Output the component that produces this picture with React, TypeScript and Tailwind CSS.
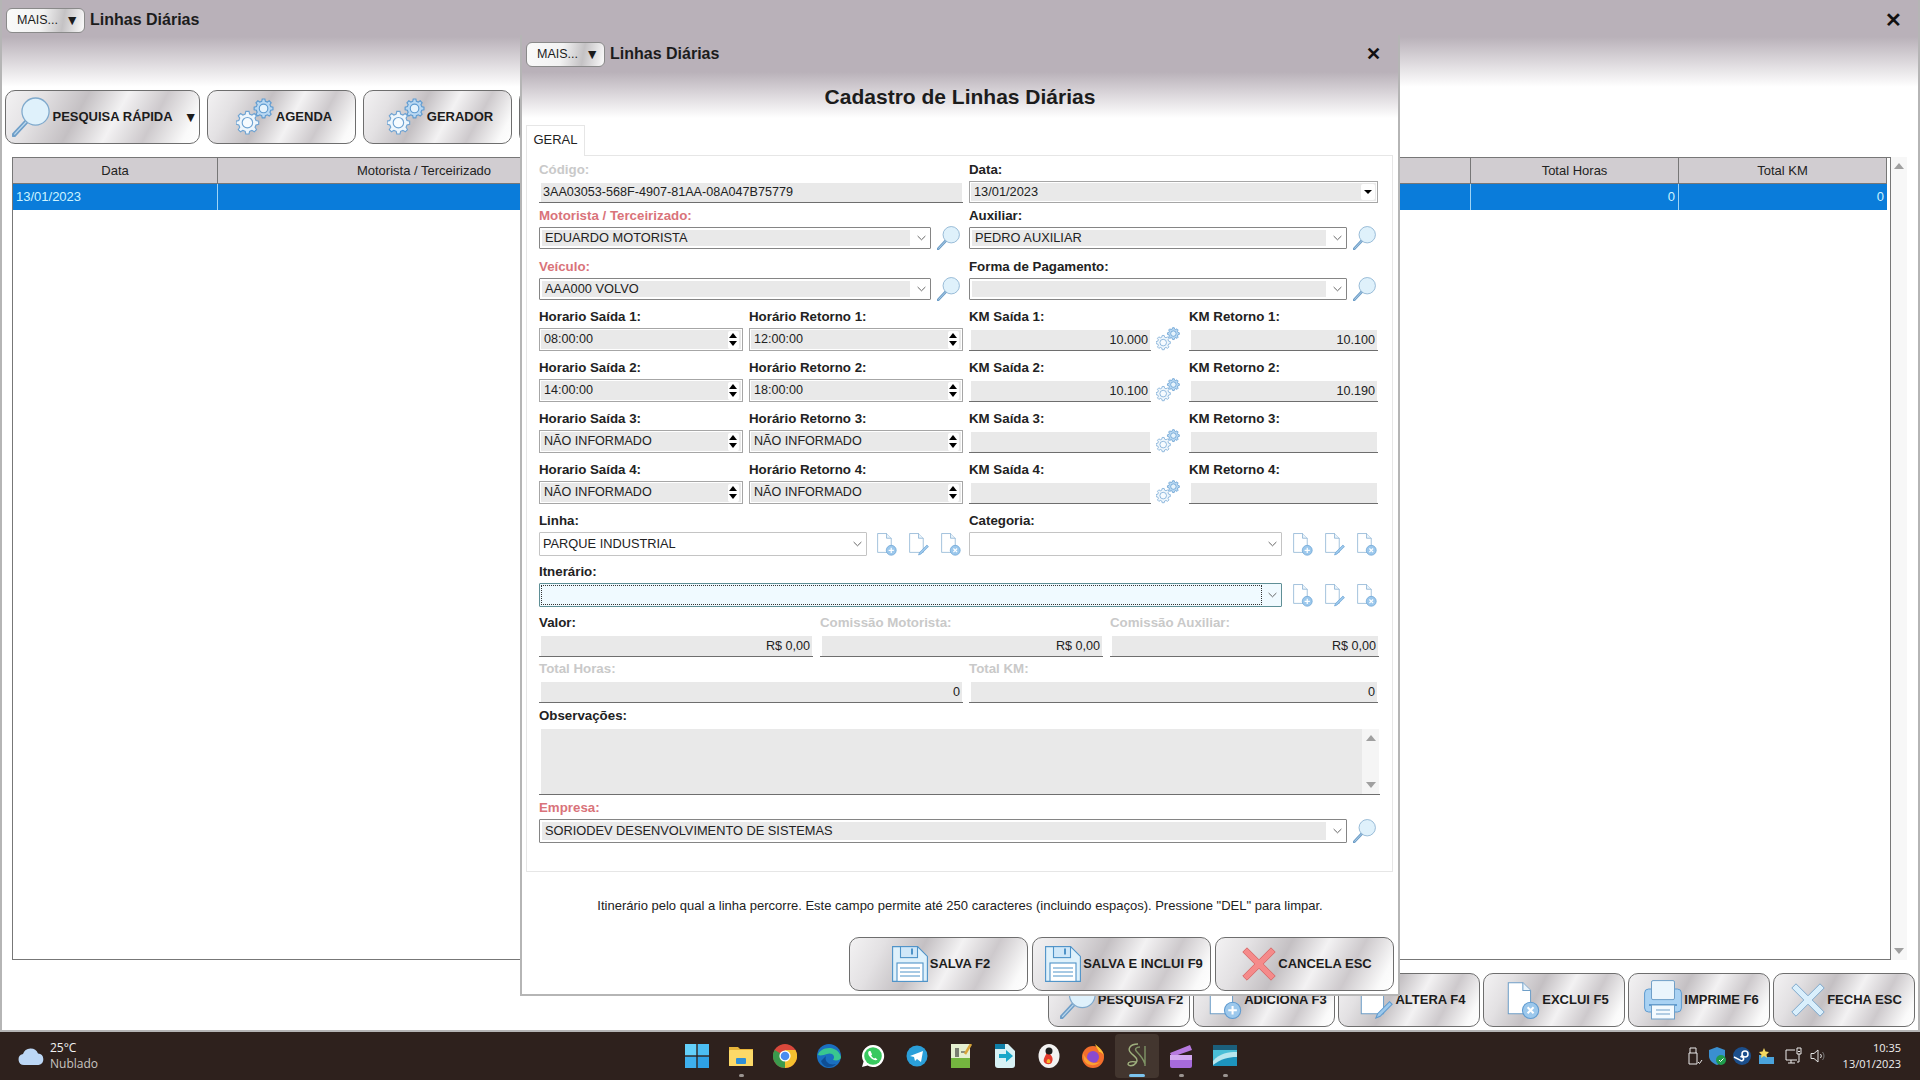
import React from "react";

const metal =
  "bg-[linear-gradient(118deg,#f3f2f3_0%,#e3e1e3_18%,#c4c0c3_38%,#f3f2f3_56%,#cdc9cc_74%,#fafafa_92%,#ffffff_100%)]";

const gearPath = (cx: number, cy: number, r: number, teeth = 8) => {
  const pts: string[] = [];
  const step = (Math.PI * 2) / teeth;
  for (let i = 0; i < teeth; i++) {
    const a = i * step;
    [
      [a - step * 0.32, r * 0.78],
      [a - step * 0.18, r],
      [a + step * 0.18, r],
      [a + step * 0.32, r * 0.78],
    ].forEach(([t, d]) =>
      pts.push(`${(cx + Math.cos(t) * d).toFixed(2)} ${(cy + Math.sin(t) * d).toFixed(2)}`),
    );
  }
  return `M${pts.join("L")}Z`;
};

const Magnifier = ({ className }: { className: string }) => (
  <svg viewBox="4 2 42 44" className={className}>
    <path d="M20 29 6 44" stroke="#6f9fc8" strokeWidth="5" strokeLinecap="round" />
    <path d="M20 29 7 43" stroke="#bcd8ee" strokeWidth="1.4" strokeLinecap="round" />
    <circle cx="30" cy="18" r="15" fill="#dff1fb" stroke="#7fa9cc" strokeWidth="1.4" />
  </svg>
);

const Gears = ({ className }: { className: string }) => (
  <svg viewBox="0 0 40 40" className={className} fill="none">
    <path d={gearPath(12, 26, 12)} fill="#eef6fc" stroke="#6fa3d2" strokeWidth="1.2" />
    <circle cx="12" cy="26" r="5.5" fill="#f6fbff" stroke="#6fa3d2" strokeWidth="1.2" />
    <path d={gearPath(29, 11, 10)} fill="#b9d8f2" stroke="#5f9bd0" strokeWidth="1.2" />
    <circle cx="29" cy="11" r="4.5" fill="#e6f3fc" stroke="#5f9bd0" strokeWidth="1.2" />
  </svg>
);

const DocShape = () => (
  <>
    <path d="M5 2h17l9 9v27H5z" fill="#fff" stroke="#6f9fc8" strokeWidth="1.2" />
    <path d="M22 2v9h9" fill="#eaf4fb" stroke="#6f9fc8" strokeWidth="1.2" />
  </>
);

const DocAdd = ({ className }: { className: string }) => (
  <svg viewBox="0 0 42 44" className={className}>
    <DocShape />
    <circle cx="31" cy="34" r="9.5" fill="#9cc8ec" stroke="#5f9bd0" strokeWidth="1.2" />
    <path d="M31 29v10M26 34h10" stroke="#fff" strokeWidth="2.4" />
  </svg>
);

const DocEdit = ({ className }: { className: string }) => (
  <svg viewBox="0 0 42 44" className={className}>
    <DocShape />
    <path d="M24 38l-2 5 5-2 14-14-3-3z" fill="#9cc8ec" stroke="#5f9bd0" strokeWidth="1.2" />
  </svg>
);

const DocDel = ({ className }: { className: string }) => (
  <svg viewBox="0 0 42 44" className={className}>
    <DocShape />
    <circle cx="31" cy="34" r="9.5" fill="#9cc8ec" stroke="#5f9bd0" strokeWidth="1.2" />
    <path d="M27.500 30.500l7 7M34.500 30.500l-7 7" stroke="#fff" strokeWidth="2.400" />
  </svg>
);

const Floppy = ({ className }: { className: string }) => (
  <svg viewBox="0 0 36 36" className={className}>
    <path d="M.6.6h25l9.800 9.800v25H.6z" fill="#dff1fb" stroke="#4f93c8" strokeWidth="1.100" />
    <rect x="8.500" y=".6" width="17" height="11" fill="#cfe7f8" stroke="#4f93c8" strokeWidth="1.100" />
    <rect x="19" y="2.500" width="2" height="6" fill="#4f93c8" />
    <rect x="5" y="17" width="26" height="18.400" fill="#fff" stroke="#4f93c8" strokeWidth="1.100" />
    <path d="M8 22h20M8 26h20M8 30h20" stroke="#4f93c8" strokeWidth="1" />
  </svg>
);

const Cross = ({ className, fill, stroke }: { className: string; fill: string; stroke: string }) => (
  <svg viewBox="0 0 34 34" className={className}>
    <path
      d="M5 .8 17 12.800 29 .8 33.200 5 21.200 17 33.200 29 29 33.200 17 21.200 5 33.200.8 29 12.800 17 .8 5z"
      fill={fill}
      stroke={stroke}
      strokeWidth="1"
    />
  </svg>
);

const Printer = ({ className }: { className: string }) => (
  <svg viewBox="0 0 38 40" className={className}>
    <rect x=".6" y="9" width="36.800" height="23" rx="4" fill="#a9d2f3" stroke="#5f9bd0" />
    <rect x="7.500" y=".6" width="23" height="19" rx="1.500" fill="#eaf5fc" stroke="#6f9fc8" />
    <rect x="5" y="24" width="28" height="2" fill="#5f9bd0" />
    <rect x="7.500" y="25" width="23" height="14" fill="#f4fafe" stroke="#6f9fc8" />
    <path d="M12 30h14M12 34h14" stroke="#6f9fc8" />
  </svg>
);

const BigButton = ({
  width,
  icon,
  label,
  arrow,
}: {
  width: string;
  icon: React.ReactNode;
  label: string;
  arrow?: boolean;
}) => (
  <div
    className={`${width} ${metal} h-[54px] shrink-0 rounded-[10px] border border-[#6e6e6e] pl-[5px] flex items-center justify-center gap-[2px] text-[13px] font-bold text-[#1c1c1c]`}
  >
    {icon}
    <span className="whitespace-nowrap">{label}</span>
    {arrow && <span className="ml-[9px] text-[14px]">▼</span>}
  </div>
);

const MaisButton = () => (
  <div className="w-[79px] h-[25px] rounded-[6px] border border-[#8a8a8a] bg-[linear-gradient(100deg,#fafafa_0%,#f2f2f2_45%,#c4c2c4_72%,#fbfbfb_100%)] flex items-center justify-between pl-[10px] pr-[5px] text-[12.500px] text-[#1c1c1c]">
    <span>MAIS...</span>
    <span className="text-[14px] leading-none">▼</span>
  </div>
);

const Label = ({ children, tone = "dark" }: { children: React.ReactNode; tone?: "dark" | "red" | "off" }) => (
  <div
    className={`h-[17px] pt-[1px] mb-[3px] leading-[16px] text-[13.300px] font-bold whitespace-nowrap ${
      tone === "red" ? "text-[#d9737a]" : tone === "off" ? "text-[#c9c9c9]" : "text-[#222]"
    }`}
  >
    {children}
  </div>
);

const ReadOnly = ({ value, h = "h-[23px]", align = "right" }: { value?: string; h?: string; align?: "left" | "right" }) => (
  <div className={`${h} p-[2px_1px_0_2px] border-b border-[#6e6e6e]`}>
    <div
      className={`h-full bg-[#e9e9e9] flex items-center px-[2px] text-[12.600px] text-[#222] ${
        align === "right" ? "justify-end" : ""
      }`}
    >
      {value}
    </div>
  </div>
);

const Chevron = () => (
  <svg viewBox="0 0 10 6" className="w-[9px] h-[6px]" fill="none">
    <path d="M.7.8 5 5 9.300.8" stroke="#555" strokeWidth="1" />
  </svg>
);

const Combo = ({ value, h = "h-[22px]" }: { value?: string; h?: string }) => (
  <div className={`${h} flex-1 min-w-0 border border-[#858585] rounded-[1px] bg-white p-[2px_0_2px_2px] flex items-stretch`}>
    <div className="flex-1 bg-[#e9e9e9] pl-[3px] flex items-center text-[12.800px] text-[#222]">{value}</div>
    <div className="w-[20px] pl-[2px] flex items-center justify-center">
      <Chevron />
    </div>
  </div>
);

const WhiteCombo = ({ value, width }: { value?: string; width: string }) => (
  <div className={`${width} h-[24px] border border-[#c4c4c4] rounded-[1px] bg-white flex items-center pl-[3px] text-[12.800px] text-[#222]`}>
    <span className="flex-1">{value}</span>
    <span className="w-[18px] flex justify-center">
      <Chevron />
    </span>
  </div>
);

const Spinner = ({ value }: { value: string }) => (
  <div className="h-[23px] border border-[#a6a6a6] p-[1px] bg-white flex items-stretch">
    <div className="flex-1 bg-[#e9e9e9] pl-[3px] flex items-center text-[12.600px] text-[#222]">{value}</div>
    <div className="w-[15px] pr-[1px] flex items-center justify-center bg-[#e9e9e9]">
      <div className="w-[11px] h-[18px] bg-white rounded-[2px] flex flex-col items-center justify-center gap-[3px]">
        <div className="h-0 w-0 border-x-[4px] border-b-[5px] border-x-transparent border-b-black" />
        <div className="h-0 w-0 border-x-[4px] border-t-[5px] border-x-transparent border-t-black" />
      </div>
    </div>
  </div>
);

const DocTrio = ({ className }: { className: string }) => (
  <div className={`${className} flex gap-[10px] items-center`}>
    <DocAdd className="w-[22px] h-[24px]" />
    <DocEdit className="w-[22px] h-[24px]" />
    <DocDel className="w-[22px] h-[24px]" />
  </div>
);

const timeRows = [
  { n: 1, a: "08:00:00", b: "12:00:00", c: "10.000", d: "10.100" },
  { n: 2, a: "14:00:00", b: "18:00:00", c: "10.100", d: "10.190" },
  { n: 3, a: "NÃO INFORMADO", b: "NÃO INFORMADO", c: "", d: "" },
  { n: 4, a: "NÃO INFORMADO", b: "NÃO INFORMADO", c: "", d: "" },
];

const TaskIcon = ({ children, active, dot }: { children: React.ReactNode; active?: boolean; dot?: boolean }) => (
  <div className={`relative w-[44px] h-[44px] flex items-center justify-center ${active ? "bg-[#43362f] rounded-[4px]" : ""}`}>
    {children}
    {dot && (
      <span
        className={`absolute bottom-[1px] h-[3px] rounded-full ${active ? "w-[16px] bg-[#7cc4ee]" : "w-[5px] bg-[#9a9490]"}`}
      />
    )}
  </div>
);

const ts = "w-[24px] h-[24px]";

const Windows = () => (
  <svg viewBox="0 0 24 24" className={ts}>
    <rect width="11.300" height="11.300" fill="#63d0fa" />
    <rect x="12.700" width="11.300" height="11.300" fill="#4bbdf3" />
    <rect y="12.700" width="11.300" height="11.300" fill="#3eb0ee" />
    <rect x="12.700" y="12.700" width="11.300" height="11.300" fill="#2ea1e6" />
  </svg>
);
const Folder = () => (
  <svg viewBox="0 0 24 24" className={ts}>
    <path d="M0 3h9l2 2h13v17H0z" fill="#e8b53a" />
    <rect y="6" width="24" height="16" rx="1" fill="#fcd968" />
    <rect x="7" y="14" width="10" height="6" rx="1" fill="#2f8fd6" />
  </svg>
);
const Chrome = () => (
  <svg viewBox="0 0 24 24" className={ts}>
    <circle cx="12" cy="12" r="12" fill="#d9483b" />
    <path d="M12 24A12 12 0 0 1 1.600 6L12 12z" fill="#3b9a4d" />
    <path d="M12 24A12 12 0 0 0 22.400 6H12z" fill="#f5c02f" />
    <circle cx="12" cy="12" r="5.600" fill="#fff" />
    <circle cx="12" cy="12" r="4.300" fill="#4a8cf0" />
  </svg>
);
const Edge = () => (
  <svg viewBox="0 0 24 24" className={ts}>
    <circle cx="12" cy="12" r="12" fill="#1a6fc0" />
    <path d="M1 11C3 3 20 0 24 13c0 3-4 4-8 3 3-4-1-8-6-6-3 1-6 2-9 1z" fill="#39c68f" />
    <path d="M9 12c-2 5 3 10 10 8-4 4-12 5-15-3z" fill="#0f4e94" />
  </svg>
);
const Whatsapp = () => (
  <svg viewBox="0 0 24 24" className={ts}>
    <path d="M12 1a11 11 0 0 0-9.400 16.600L1 23l5.600-1.500A11 11 0 1 0 12 1z" fill="#fff" />
    <circle cx="12" cy="12" r="8.800" fill="#38c95f" />
    <path d="M8 7c-1.500 1.500-1 4 1.500 6.500S15 17 16.500 15.500l-2.300-1.800-1 .8c-1.200-.6-2.400-1.800-3-3l.9-1L9.500 7z" fill="#fff" />
  </svg>
);
const Telegram = () => (
  <svg viewBox="0 0 24 24" className={ts}>
    <circle cx="12" cy="12" r="10.500" fill="#2b9fd9" />
    <path d="M5 12 18 7l-2 11-4-3-2 2-1-4z" fill="#fff" />
  </svg>
);
const Notes = () => (
  <svg viewBox="0 0 24 24" className={ts}>
    <rect x="2" y="0" width="19" height="24" fill="#e5efd0" />
    <rect x="2" y="14" width="19" height="10" fill="#74b53f" />
    <path d="M7 4v9M9 4v9M12 8h4" stroke="#333" strokeWidth="1.200" />
    <path d="M22 0 16 10" stroke="#d8a53a" strokeWidth="2.500" />
  </svg>
);
const ArrowApp = () => (
  <svg viewBox="0 0 24 24" className={ts}>
    <path d="M2 0h13l7 7v14a3 3 0 0 1-3 3H5a3 3 0 0 1-3-3z" fill="#d8f2f6" />
    <path d="M2 0h10v5H2z" fill="#0f7fa8" />
    <path d="M6 10h7V6l7 6-7 6v-4H6z" fill="#18a7c9" />
  </svg>
);
const Fire = () => (
  <svg viewBox="0 0 24 24" className={ts}>
    <ellipse cx="12" cy="12" rx="10.500" ry="12" fill="#f2f2f2" />
    <path d="M10 8c4 2 7 6 5 10-1 3-6 3-8 0-1-3 1-5 3-10z" fill="#e33b2e" />
    <circle cx="12" cy="7" r="3.500" fill="#1c1c1c" />
    <path d="M11 15c2 0 3 2 2 4h-3c-1-2 0-3 1-4z" fill="#f5b72f" />
  </svg>
);
const Firefox = () => (
  <svg viewBox="0 0 24 24" className={ts}>
    <circle cx="12" cy="13" r="11" fill="#f36e2c" />
    <path d="M14 0c5 4 9 8 9 13 0-3-3-5-5-5-1-3-3-5-4-8z" fill="#fcc233" />
    <circle cx="12" cy="13" r="6" fill="#8a4ad0" />
    <path d="M2 9c3 7 9 12 17 9-3 4-13 5-16-2z" fill="#fba033" />
  </svg>
);
const SoriLogo = () => (
  <svg viewBox="0 0 24 28" className="w-[24px] h-[28px]" fill="none" stroke="#9fb07e" strokeWidth="1.400">
    <path d="M13 2C5 2 2 7 6 11s8 6 5 10-8 3-8 1 4-3 8-2" />
    <path d="M15 5c-4 0-6 2-3 5s6 6 8 12M20 4v20" stroke="#7f9466" />
  </svg>
);
const Clipchamp = () => (
  <svg viewBox="0 0 24 24" className={ts}>
    <path d="M1 9 21 1l2 5L3 13z" fill="#b77ae0" />
    <rect x="1" y="11" width="22" height="13" rx="2" fill="#a76bdc" />
    <rect x="1" y="11" width="22" height="5" fill="#d2a8f0" />
  </svg>
);
const WaveApp = () => (
  <svg viewBox="0 0 24 24" className={ts}>
    <rect y="1" width="24" height="21" fill="#1b5f7c" />
    <path d="M0 6h24v16H0z" fill="#49bfd7" />
    <path d="M0 17c7-8 15-9 24-9v14H0z" fill="#b7e7ef" />
    <path d="M0 21c8-6 15-8 24-8v9H0z" fill="#1d94bd" />
  </svg>
);

export default function App() {
  return (
    <div className="relative w-[1920px] h-[1080px] overflow-hidden bg-white flex flex-col font-['Liberation_Sans',Arial,sans-serif]">
      {/* janela principal */}
      <div className="h-[1032px] flex flex-col border-x-2 border-b-2 border-[#b5b5b5] bg-[linear-gradient(#b9b1b9_37px,#ffffff_87px)]">
        <div className="h-[39px] flex items-center pl-[4px] pr-[16px] pt-[1px]">
          <MaisButton />
          <span className="ml-[5px] text-[16px] font-bold text-[#1c1c1c]">Linhas Diárias</span>
          <span className="ml-auto text-[20px] font-bold leading-none text-[#111]">✕</span>
        </div>
        <div className="mt-[51px] flex gap-[7px] pl-[3px]">
          <BigButton
            width="w-[195px]"
            arrow
            label="PESQUISA RÁPIDA"
            icon={<Magnifier className="w-[38px] h-[40px]" />}
          />
          <BigButton width="w-[149px]" label="AGENDA" icon={<Gears className="w-[38px] h-[40px]" />} />
          <BigButton width="w-[149px]" label="GERADOR" icon={<Gears className="w-[38px] h-[40px]" />} />
          <BigButton width="w-[149px]" label="" icon={null} />
        </div>
        <div className="mt-[13px] ml-[10px] mr-[10px] h-[803px] flex">
          <div className="w-[1879px] border border-[#777] bg-white">
            <div className="w-[1874px] grid grid-cols-[205px_412px_841px_208px_208px] h-[26px] bg-[#d1cdd1] border-b border-[#777] text-[13px] text-[#222]">
              <div className="flex items-center justify-center border-r border-[#777]">Data</div>
              <div className="flex items-center justify-center">Motorista / Terceirizado</div>
              <div className="border-r border-[#777]" />
              <div className="flex items-center justify-center border-r border-[#777]">Total Horas</div>
              <div className="flex items-center justify-center border-r border-[#777]">Total KM</div>
            </div>
            <div className="w-[1874px] grid grid-cols-[205px_412px_841px_208px_208px] h-[26px] bg-[#0a7cda] text-[13px] text-[#cdf3ff]">
              <div className="flex items-center pl-[3px] border-r border-[#9fd4f5]">13/01/2023</div>
              <div />
              <div className="border-r border-[#9fd4f5]" />
              <div className="flex items-center justify-end pr-[3px] border-r border-[#9fd4f5]">0</div>
              <div className="flex items-center justify-end pr-[3px]">0</div>
            </div>
          </div>
          <div className="w-[16px] bg-[#f7f7f7] flex flex-col items-center justify-between py-[6px]">
            <div className="h-0 w-0 border-x-[5px] border-b-[6px] border-x-transparent border-b-[#a0a0a0]" />
            <div className="h-0 w-0 border-x-[5px] border-t-[6px] border-x-transparent border-t-[#a0a0a0]" />
          </div>
        </div>
        <div className="mt-[13px] flex justify-end gap-[3px] pr-[3px]">
          <BigButton width="w-[142px]" label="PESQUISA F2" icon={<Magnifier className="w-[36px] h-[38px]" />} />
          <BigButton width="w-[142px]" label="ADICIONA F3" icon={<DocAdd className="w-[36px] h-[38px]" />} />
          <BigButton width="w-[142px]" label="ALTERA F4" icon={<DocEdit className="w-[36px] h-[38px]" />} />
          <BigButton width="w-[142px]" label="EXCLUI F5" icon={<DocDel className="w-[36px] h-[38px]" />} />
          <BigButton width="w-[142px]" label="IMPRIME F6" icon={<Printer className="w-[38px] h-[40px]" />} />
          <BigButton
            width="w-[142px]"
            label="FECHA ESC"
            icon={<Cross className="w-[34px] h-[34px]" fill="#d9effc" stroke="#7fa9cc" />}
          />
        </div>
      </div>

      {/* barra de tarefas */}
      <div className="h-[48px] bg-[#2e211d] grid grid-cols-[1fr_auto_1fr] items-center">
        <div className="flex items-center pl-[18px] gap-[6px]">
          <svg viewBox="0 0 26 18" className="w-[26px] h-[18px]">
            <path d="M6 18a5.500 5.500 0 0 1-1-10.900A8 8 0 0 1 20 6.500 5.800 5.800 0 0 1 20.500 18z" fill="#bcd7f5" />
          </svg>
          <div className="text-[12px] leading-[16px] font-['Open_Sans',sans-serif]">
            <div className="text-[#f2f2f2]">25°C</div>
            <div className="text-[#c9c4c0]">Nublado</div>
          </div>
        </div>
        <div className="flex items-center ml-[2px]">
          <TaskIcon>
            <Windows />
          </TaskIcon>
          <TaskIcon dot>
            <Folder />
          </TaskIcon>
          <TaskIcon>
            <Chrome />
          </TaskIcon>
          <TaskIcon>
            <Edge />
          </TaskIcon>
          <TaskIcon>
            <Whatsapp />
          </TaskIcon>
          <TaskIcon>
            <Telegram />
          </TaskIcon>
          <TaskIcon>
            <Notes />
          </TaskIcon>
          <TaskIcon>
            <ArrowApp />
          </TaskIcon>
          <TaskIcon>
            <Fire />
          </TaskIcon>
          <TaskIcon>
            <Firefox />
          </TaskIcon>
          <TaskIcon active dot>
            <SoriLogo />
          </TaskIcon>
          <TaskIcon dot>
            <Clipchamp />
          </TaskIcon>
          <TaskIcon dot>
            <WaveApp />
          </TaskIcon>
        </div>
        <div className="flex items-center justify-end pr-[19px]">
          <div className="flex items-center gap-[6px] mr-[10px]">
            <svg viewBox="0 0 16 18" className="w-[16px] h-[18px]" fill="none" stroke="#e8e8e8" strokeWidth="1">
              <path d="M3 6V1h6v5M2 6h8v11H2zM11 15l1.500 1.500L15 13" />
            </svg>
            <svg viewBox="0 0 18 18" className="w-[18px] h-[18px]">
              <path d="M8 0l8 3v6c0 4-3 7-8 9-5-2-8-5-8-9V3z" fill="#3a8fd0" />
              <circle cx="12" cy="13" r="5" fill="#1f9b4c" />
              <path d="M10 13l1.500 1.500L14.500 11.500" stroke="#fff" fill="none" />
            </svg>
            <svg viewBox="0 0 18 18" className="w-[18px] h-[18px]">
              <circle cx="9" cy="9" r="9" fill="#1c4f8c" />
              <circle cx="12" cy="7" r="3" fill="none" stroke="#fff" strokeWidth="1.500" />
              <path d="M1 10l6 3a2 2 0 1 0 .5-3L10 8" stroke="#fff" strokeWidth="1.500" fill="none" />
            </svg>
            <svg viewBox="0 0 18 18" className="w-[18px] h-[18px]">
              <path d="M2 8h6l2 2h7v7H2z" fill="#4aa3dc" />
              <path d="M7 1l1.500 3.500L12 5 9.500 7.500 10 11 7 9 4 11l.5-3.500L2 5l3.500-.5z" fill="#f4d860" />
            </svg>
          </div>
          <div className="flex items-center gap-[7px] mr-[17px]">
            <svg viewBox="0 0 18 18" className="w-[18px] h-[18px]" fill="none" stroke="#ececec" strokeWidth="1">
              <path d="M1 3h9M1 3v10h11M6 13v3M3 16h7M12 1h4v6h-4zM13 4.500h2M14 7v8h-2" />
            </svg>
            <svg viewBox="0 0 16 16" className="w-[16px] h-[16px]" fill="none" stroke="#e4e4e4" strokeWidth="1">
              <path d="M1 5.500h3L8 2v12L4 10.500H1zM10.500 6a3 3 0 0 1 0 4" />
              <path d="M12.500 4a6 6 0 0 1 0 8" stroke="#777" />
            </svg>
          </div>
          <div className="text-right text-[11px] leading-[16px] text-[#f0f0f0] font-['Open_Sans',sans-serif]">
            <div>10:35</div>
            <div>13/01/2023</div>
          </div>
        </div>
      </div>

      {/* cadastro sobre a janela principal */}
      <div className="absolute left-[520px] top-[35px] w-[880px] h-[961px] flex flex-col border-x-2 border-b-2 border-[#b5b5b5] bg-[linear-gradient(#b9b1b9_37px,#ffffff_83px)]">
        <div className="h-[38px] flex items-center pl-[4px] pr-[17px]">
          <MaisButton />
          <span className="ml-[5px] text-[16px] font-bold text-[#1c1c1c]">Linhas Diárias</span>
          <span className="ml-auto text-[18px] font-bold leading-none text-[#111]">✕</span>
        </div>
        <div className="h-[52px] pb-[4px] flex items-center justify-center text-[21px] font-bold text-[#1c1c1c]">
          Cadastro de Linhas Diárias
        </div>
        <div className="h-[30px] ml-[4px] flex">
          <div className="w-[59px] h-[31px] pb-[3px] border border-b-0 border-[#e6e6e6] bg-white flex items-center justify-center text-[13px] text-[#222] relative z-10">
            GERAL
          </div>
        </div>
        <div className="ml-[4px] w-[867px] h-[717px] border border-[#e6e6e6] px-[12px] pt-[5px]">
          <div className="flex gap-[6px]">
            <div className="w-[424px]">
              <Label tone="off">Código:</Label>
              <ReadOnly value="3AA03053-568F-4907-81AA-08A047B75779" h="h-[22px]" align="left" />
            </div>
            <div className="w-[409px]">
              <Label>Data:</Label>
              <div className="h-[22px] border border-[#a6a6a6] p-[1px] flex items-stretch">
                <div className="flex-1 bg-[#e9e9e9] pl-[3px] flex items-center text-[12.800px] text-[#222]">13/01/2023</div>
                <div className="w-[17px] bg-[#e9e9e9] flex items-center justify-center">
                  <div className="w-[14px] h-[16px] bg-white rounded-[2px] flex items-center justify-center">
                    <div className="h-0 w-0 border-x-[4px] border-t-[4px] border-x-transparent border-t-black" />
                  </div>
                </div>
              </div>
            </div>
          </div>

          <div className="mt-[4px] flex gap-[6px]">
            <div className="w-[424px]">
              <Label tone="red">Motorista / Terceirizado:</Label>
              <div className="h-[22px] flex items-center gap-[6px] pr-[3px]">
                <Combo value="EDUARDO MOTORISTA" />
                <Magnifier className="w-[23px] h-[24px]" />
              </div>
            </div>
            <div className="w-[409px]">
              <Label>Auxiliar:</Label>
              <div className="h-[22px] flex items-center gap-[6px] pr-[2px]">
                <Combo value="PEDRO AUXILIAR" />
                <Magnifier className="w-[23px] h-[24px]" />
              </div>
            </div>
          </div>

          <div className="mt-[9px] flex gap-[6px]">
            <div className="w-[424px]">
              <Label tone="red">Veículo:</Label>
              <div className="h-[22px] flex items-center gap-[6px] pr-[3px]">
                <Combo value="AAA000 VOLVO" />
                <Magnifier className="w-[23px] h-[24px]" />
              </div>
            </div>
            <div className="w-[409px]">
              <Label>Forma de Pagamento:</Label>
              <div className="h-[22px] flex items-center gap-[6px] pr-[2px]">
                <Combo />
                <Magnifier className="w-[23px] h-[24px]" />
              </div>
            </div>
          </div>

          {timeRows.map((r) => (
            <div key={r.n} className="mt-[8px] flex">
              <div className="w-[204px] mr-[6px]">
                <Label>Horario Saída {r.n}:</Label>
                <Spinner value={r.a} />
              </div>
              <div className="w-[214px] mr-[6px]">
                <Label>Horário Retorno {r.n}:</Label>
                <Spinner value={r.b} />
              </div>
              <div className="w-[182px]">
                <Label>KM Saída {r.n}:</Label>
                <ReadOnly value={r.c} />
              </div>
              <div className="w-[38px] h-[43px] pt-[19px] pl-[5px]">
                <Gears className="w-[24px] h-[24px]" />
              </div>
              <div className="w-[189px]">
                <Label>KM Retorno {r.n}:</Label>
                <ReadOnly value={r.d} />
              </div>
            </div>
          ))}

          <div className="mt-[8px] flex gap-[6px]">
            <div className="w-[424px]">
              <Label>Linha:</Label>
              <div className="flex items-center">
                <WhiteCombo width="w-[328px]" value="PARQUE INDUSTRIAL" />
                <DocTrio className="ml-[8px]" />
              </div>
            </div>
            <div className="w-[409px]">
              <Label>Categoria:</Label>
              <div className="flex items-center">
                <WhiteCombo width="w-[313px]" />
                <DocTrio className="ml-[9px]" />
              </div>
            </div>
          </div>

          <div className="mt-[7px]">
            <Label>Itnerário:</Label>
            <div className="flex items-center">
              <div className="w-[743px] h-[24px] border border-[#5f8f96] rounded-[1px] bg-[#f0faff] flex p-[1px]">
                <div className="flex-1 border border-dotted border-[#333]" />
                <div className="w-[18px] pl-[2px] flex items-center justify-center">
                  <Chevron />
                </div>
              </div>
              <DocTrio className="ml-[9px]" />
            </div>
          </div>

          <div className="mt-[7px] flex">
            <div className="w-[274px] mr-[7px]">
              <Label>Valor:</Label>
              <ReadOnly value="R$ 0,00" />
            </div>
            <div className="w-[283px] mr-[7px]">
              <Label tone="off">Comissão Motorista:</Label>
              <ReadOnly value="R$ 0,00" />
            </div>
            <div className="w-[269px]">
              <Label tone="off">Comissão Auxiliar:</Label>
              <ReadOnly value="R$ 0,00" />
            </div>
          </div>

          <div className="mt-[3px] flex gap-[6px]">
            <div className="w-[424px]">
              <Label tone="off">Total Horas:</Label>
              <ReadOnly value="0" />
            </div>
            <div className="w-[409px]">
              <Label tone="off">Total KM:</Label>
              <ReadOnly value="0" />
            </div>
          </div>

          <div className="mt-[4px]">
            <Label>Observações:</Label>
            <div className="h-[68px] border-b border-[#6e6e6e] p-[2px_1px_0_2px] flex">
              <div className="flex-1 bg-[#e9e9e9]" />
              <div className="w-[17px] bg-[#f5f5f5] flex flex-col items-center justify-between py-[6px]">
                <div className="h-0 w-0 border-x-[5px] border-b-[6px] border-x-transparent border-b-[#a0a0a0]" />
                <div className="h-0 w-0 border-x-[5px] border-t-[6px] border-x-transparent border-t-[#a0a0a0]" />
              </div>
            </div>
          </div>

          <div className="mt-[4px]">
            <Label tone="red">Empresa:</Label>
            <div className="h-[24px] w-[837px] flex items-center gap-[6px]">
              <Combo value="SORIODEV DESENVOLVIMENTO DE SISTEMAS" h="h-[24px]" />
              <Magnifier className="w-[23px] h-[24px]" />
            </div>
          </div>
        </div>
        <div className="mt-[24px] text-center text-[13px] text-[#222]">
          Itinerário pelo qual a linha percorre. Este campo permite até 250 caracteres (incluindo espaços). Pressione "DEL" para limpar.
        </div>
        <div className="mt-[21px] flex justify-end gap-[4px] pr-[4px]">
          <BigButton width="w-[179px]" label="SALVA F2" icon={<Floppy className="w-[36px] h-[36px]" />} />
          <BigButton width="w-[179px]" label="SALVA E INCLUI F9" icon={<Floppy className="w-[36px] h-[36px]" />} />
          <BigButton
            width="w-[179px]"
            label="CANCELA ESC"
            icon={<Cross className="w-[34px] h-[34px]" fill="#f58a8a" stroke="#d96a6a" />}
          />
        </div>
      </div>
    </div>
  );
}
